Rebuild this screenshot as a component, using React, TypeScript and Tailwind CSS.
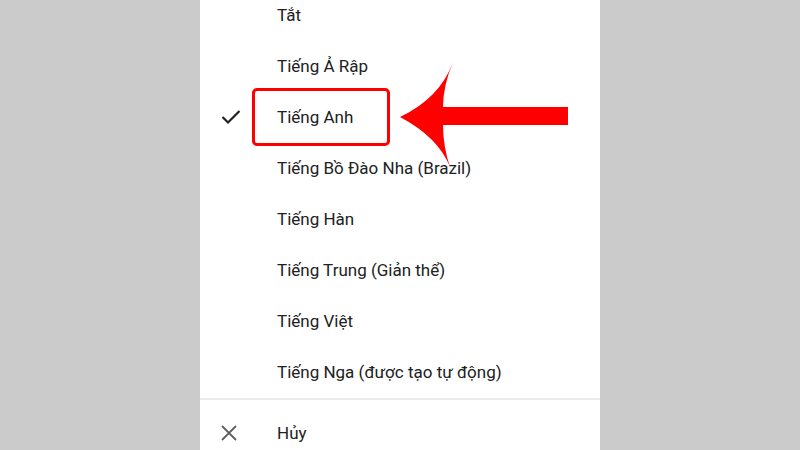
const items = [
  'Tắt',
  'Tiếng Ả Rập',
  'Tiếng Anh',
  'Tiếng Bồ Đào Nha (Brazil)',
  'Tiếng Hàn',
  'Tiếng Trung (Giản thể)',
  'Tiếng Việt',
  'Tiếng Nga (được tạo tự động)',
];

function CheckIcon() {
  return (
    <svg width="20" height="16" viewBox="0 0 20 16" className="block">
      <polyline points="1.5,7 7,12.5 18.5,1" fill="none" stroke="#212121" strokeWidth="2.2" />
    </svg>
  );
}

function CloseIcon() {
  return (
    <svg width="16" height="16" viewBox="0 0 16 16" className="block">
      <path d="M1 1L15 15M15 1L1 15" fill="none" stroke="#5f5f5f" strokeWidth="1.8" />
    </svg>
  );
}

export default function App() {
  return (
    <div
      className="relative flex h-[450px] w-[800px] justify-center overflow-hidden bg-[#cbcbcb]"
      style={{ fontFamily: 'Roboto, "Noto Sans", sans-serif' }}
    >
      <div className="flex w-[400px] flex-col bg-white">
        <div className="-mt-[10px] flex shrink-0 flex-col">
          {items.map((label, i) => (
            <div key={label} className="flex h-[51px] shrink-0 items-center">
              <div className="flex w-[77px] justify-end pr-[36px]">
                {i === 2 ? <CheckIcon /> : null}
              </div>
              <span className="text-[17px] leading-none text-[#212121]">{label}</span>
            </div>
          ))}
        </div>
        <div className="h-[2px] shrink-0 bg-[#ececec]" />
        <div className="flex h-[66px] shrink-0 items-center">
          <div className="flex w-[77px] justify-end pr-[40px]">
            <CloseIcon />
          </div>
          <span className="text-[17px] leading-none text-[#212121]">Hủy</span>
        </div>
      </div>

      <div className="absolute left-[252px] top-[88px] h-[58px] w-[138px] rounded-[5px] border-[3px] border-[#ff0000]" />

      <svg className="absolute left-0 top-0" width="800" height="450" viewBox="0 0 800 450">
        <path
          d="M400 117 Q440 98 453 62 Q443 86 443 107 L568 107 L568 125 L443 125 Q443 146 450 167 Q438 137 400 117 Z"
          fill="#ff0000"
        />
      </svg>
    </div>
  );
}
